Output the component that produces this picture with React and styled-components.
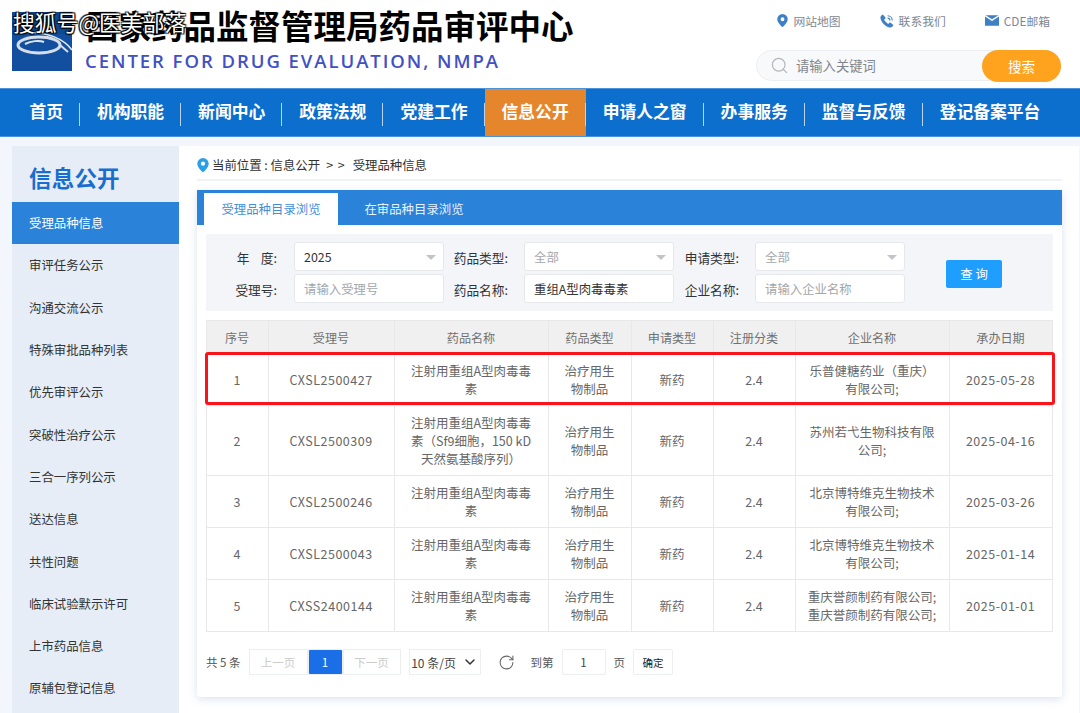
import React from "react";
import styled, { createGlobalStyle } from "styled-components";
import { RotateCw, ChevronDown, Search } from "lucide-react";

const cjk = `"Noto Sans CJK SC", "Noto Sans", sans-serif`;

const GlobalStyle = createGlobalStyle`
  html, body {
    margin: 0;
    padding: 0;
    height: 713px;
    overflow: hidden;
    background: #f3f7fd;
    font-family: ${cjk};
  }
  * { box-sizing: border-box; }
`;

const Page = styled.div`
  position: relative;
  width: 1080px;
  height: 713px;
  overflow: hidden;
`;

const Watermark = styled.div`
  position: absolute;
  left: 13px;
  top: 8px;
  font-size: 21.8px;
  line-height: 28px;
  color: #fff;
  text-shadow: 1px 1px 1px #000, -1px -1px 1px #000, 1px -1px 1px #000, -1px 1px 1px #000;
  white-space: nowrap;
`;

const Header = styled.header`
  height: 88px;
  background: #fff;
  display: flex;
  justify-content: space-between;
  padding: 0 19px 0 12px;
`;

const Brand = styled.div`
  display: flex;
  gap: 14px;
  padding-top: 6px;
`;

const BrandText = styled.div`
  display: flex;
  flex-direction: column;
`;

const BrandTitle = styled.div`
  font-size: 32.5px;
  line-height: 38px;
  font-weight: 700;
  color: #000;
  white-space: nowrap;
`;

const BrandSub = styled.div`
  margin: 5px 0 0 -1px;
  font-family: "Open Sans", sans-serif;
  font-size: 18.5px;
  line-height: 24px;
  font-weight: 600;
  letter-spacing: 1.95px;
  color: #3f51c4;
  white-space: nowrap;
`;

const LogoSvg = styled.svg`
  display: block;
  margin-top: 6px;
`;

const Tools = styled.div`
  width: 305px;
  display: flex;
  flex-direction: column;
  align-items: flex-end;
`;

const TopLinks = styled.div`
  display: flex;
  height: 50px;
  align-items: flex-start;
  padding-top: 12px;
  gap: 39px;
  padding-right: 11px;
`;

const TopLink = styled.a`
  display: flex;
  align-items: center;
  gap: 5px;
  height: 17px;
  font-size: 11.8px;
  color: #7d8794;
  white-space: nowrap;
`;

const SearchBox = styled.div`
  width: 305px;
  height: 31px;
  border: 1px solid #eceef1;
  border-radius: 16px;
  background: #f8f9fb;
  display: flex;
  align-items: center;
  padding-left: 13px;
  position: relative;
`;

const SearchHint = styled.span`
  margin-left: 7px;
  font-size: 13.3px;
  color: #80858c;
  flex: 1;
`;

const SearchButton = styled.button`
  width: 79px;
  height: 32px;
  margin: -1px -1px -1px 0;
  border: 0;
  border-radius: 16px;
  background: #ffa31f;
  color: #fff;
  font-family: inherit;
  font-size: 13.5px;
`;

const Nav = styled.nav`
  height: 49px;
  background: #0d6fcd;
  border-top: 1px solid #4b93dc;
  border-bottom: 1px solid #4b93dc;
  display: flex;
  padding-left: 12.4px;
`;

const NavItem = styled.a`
  position: relative;
  height: 47px;
  padding: 0 17px 3px;
  display: flex;
  align-items: center;
  font-size: 16.8px;
  font-weight: 700;
  color: #fff;
  white-space: nowrap;
  background: ${(p) => (p.$active ? "#e5862c" : "transparent")};

  &:not(:last-child)::after {
    content: "";
    position: absolute;
    right: 0;
    top: 14px;
    height: 23px;
    width: 1px;
    background: #b9d5f0;
  }
`;

const Body = styled.div`
  display: flex;
  padding: 9px 1px 0 12px;
  height: 576px;
`;

const Sidebar = styled.aside`
  width: 167px;
  background: #e6edf6;
  flex-shrink: 0;
`;

const SideTitle = styled.div`
  height: 56px;
  padding: 15px 0 0 17px;
  font-size: 22.5px;
  line-height: 32px;
  font-weight: 700;
  letter-spacing: 0.2px;
  color: #1a6dd0;
`;

const SideItem = styled.a`
  display: flex;
  align-items: center;
  height: 42.3px;
  padding-left: 17px;
  font-size: 12.4px;
  color: ${(p) => (p.$active ? "#fff" : "#333")};
  background: ${(p) => (p.$active ? "#2b82d9" : "transparent")};
`;

const Main = styled.main`
  flex: 1;
  background: #fff;
  padding: 0 17px 0 18px;
`;

const Crumbs = styled.div`
  height: 35px;
  border-bottom: 2px solid #f1f2f4;
  display: flex;
  align-items: center;
  font-size: 12.4px;
  color: #333;
  padding-top: 5px;
  white-space: pre;
`;

const CrumbPin = styled.span`
  display: flex;
  margin-right: 3px;
`;

const CrumbArrows = styled.span`
  margin: 0 8px 0 6px;
  word-spacing: 2px;
`;

const Card = styled.section`
  margin-top: 9px;
  height: 507px;
  background: #fff;
  border-radius: 0 0 3px 3px;
  box-shadow: 0 2px 8px rgba(120, 150, 190, 0.28);
`;

const TabBar = styled.div`
  height: 35px;
  background: #2b82d9;
  display: flex;
  align-items: flex-end;
  padding-left: 7px;
`;

const Tab = styled.a`
  width: 134px;
  height: 32px;
  display: flex;
  align-items: center;
  justify-content: center;
  font-size: 12.4px;
  color: ${(p) => (p.$active ? "#3f8fdc" : "#e6f1fb")};
  background: ${(p) => (p.$active ? "#fff" : "transparent")};
  margin-right: ${(p) => (p.$active ? "9px" : "0")};
`;

const Inner = styled.div`
  padding: 9px 9px 0;
`;

const Filter = styled.div`
  height: 77px;
  background: #f3f5f9;
  display: grid;
  grid-template-columns: 88px 150px 80px 150px 81px 150px auto;
  grid-template-rows: 29px 29px;
  row-gap: 3px;
  align-content: center;
`;

const FieldLabel = styled.label`
  display: flex;
  align-items: center;
  justify-content: flex-end;
  padding-right: ${(p) => p.$pad || "17px"};
  padding-top: 1px;
  font-size: 12.7px;
  color: #333;
  white-space: pre;
`;

const Field = styled.div`
  background: #fff;
  border: 1px solid #e6e8ec;
  border-radius: 3px;
  display: flex;
  align-items: center;
  justify-content: space-between;
  padding: 1px 7px 0 9px;
  font-size: 12.4px;
  color: ${(p) => (p.$muted ? "#a3a7ad" : "#333")};
`;

const Caret = styled.span`
  width: 0;
  height: 0;
  border-left: 5.5px solid transparent;
  border-right: 5.5px solid transparent;
  border-top: 5.5px solid #c2c4c8;
`;

const QueryCell = styled.div`
  grid-column: 7;
  grid-row: 1 / span 2;
  display: flex;
  align-items: center;
  padding: 2px 0 0 41px;
`;

const QueryButton = styled.button`
  width: 56px;
  height: 28px;
  border: 0;
  border-radius: 2px;
  background: #1e9fff;
  color: #fff;
  font-family: inherit;
  font-size: 12.4px;
`;

const TableWrap = styled.div`
  position: relative;
  margin-top: 9px;
`;

const Table = styled.table`
  width: 846px;
  margin-left: -0.5px;
  table-layout: fixed;
  border-collapse: collapse;
  font-size: 12.5px;
  color: #666;
`;

const Th = styled.th`
  height: 33px;
  background: #f0f0f0;
  border: 1px solid #e8e8e8;
  font-size: 12.1px;
  font-weight: 400;
  color: #707070;
  padding: 0;
`;

const Td = styled.td`
  height: ${(p) => p.$h}px;
  border: 1px solid #e8e8e8;
  text-align: center;
  padding: 0 12px;
  line-height: 18px;
  white-space: pre-line;
`;

const CodeTd = styled(Td)`
  letter-spacing: 0.5px;
`;

const Highlight = styled.div`
  position: absolute;
  left: -1px;
  top: 32px;
  width: 850px;
  height: 53px;
  border: 3px solid #f8141a;
  border-radius: 3px;
  pointer-events: none;
`;

const Pager = styled.div`
  display: flex;
  align-items: center;
  margin-top: 17px;
  height: 26px;
  font-size: 11.5px;
  color: #555;
`;

const PageBox = styled.div`
  height: 26px;
  width: ${(p) => p.$w}px;
  margin-left: ${(p) => p.$ml || 0}px;
  margin-right: ${(p) => p.$mr || 0}px;
  display: flex;
  align-items: center;
  justify-content: center;
  gap: 6px;
  border: 1px solid #eceef0;
  font-size: ${(p) => p.$fs || "11.5px"};
  color: ${(p) => p.$color || "#444"};
  background: ${(p) => p.$bg || "#fff"};
  border-radius: ${(p) => p.$r || "0"};
`;

const PagerText = styled.span`
  margin-left: ${(p) => p.$ml || 0}px;
  white-space: nowrap;
`;

const RefreshIcon = styled(RotateCw)`
  margin-left: 17px;
  color: #666;
`;

const columns = [
  ["序号", 62], ["受理号", 126], ["药品名称", 154], ["药品类型", 83],
  ["申请类型", 82], ["注册分类", 82], ["企业名称", 154], ["承办日期", 103],
];

const rows = [
  { no: 1, id: "CXSL2500427", name: "注射用重组A型肉毒毒素", company: "乐普健糖药业（重庆）有限公司;", date: "2025-05-28", h: 52 },
  { no: 2, id: "CXSL2500309", name: "注射用重组A型肉毒毒素（Sf9细胞，150 kD天然氨基酸序列）", company: "苏州若弋生物科技有限公司;", date: "2025-04-16", h: 70 },
  { no: 3, id: "CXSL2500246", name: "注射用重组A型肉毒毒素", company: "北京博特维克生物技术有限公司;", date: "2025-03-26", h: 52 },
  { no: 4, id: "CXSL2500043", name: "注射用重组A型肉毒毒素", company: "北京博特维克生物技术有限公司;", date: "2025-01-14", h: 52 },
  { no: 5, id: "CXSS2400144", name: "注射用重组A型肉毒毒素", company: "重庆誉颜制药有限公司;\n重庆誉颜制药有限公司;", date: "2025-01-01", h: 52 },
];

const navItems = ["首页", "机构职能", "新闻中心", "政策法规", "党建工作", "信息公开", "申请人之窗", "办事服务", "监督与反馈", "登记备案平台"];

const sideItems = ["受理品种信息", "审评任务公示", "沟通交流公示", "特殊审批品种列表", "优先审评公示", "突破性治疗公示", "三合一序列公示", "送达信息", "共性问题", "临床试验默示许可", "上市药品信息", "原辅包登记信息"];

const Logo = () => (
  <LogoSvg width="60" height="59" viewBox="0 0 60 59">
    <rect width="60" height="59" fill="#134f9f" />
    <rect width="60" height="22" fill="#0e4a93" />
    <path d="M15 21 C34 19 52 27 60 38" fill="none" stroke="#e3eaf3" strokeWidth="1.6" />
    <ellipse cx="27" cy="33" rx="21" ry="8" fill="none" stroke="#d6dfe9" strokeWidth="3" />
    <path d="M13 32 C19 29 27 28 32 30" fill="none" stroke="#dfe6ee" strokeWidth="2" />
    <path d="M48 33 L56 40" fill="none" stroke="#d6dfe9" strokeWidth="2" />
  </LogoSvg>
);

const PinIcon = ({ size = 13, color = "#3f7fc4" }) => (
  <svg width={size} height={size * 1.2} viewBox="0 0 20 24">
    <path fillRule="evenodd" fill={color} d="M10 0a9.500 9.500 0 0 1 9.500 9.500C19.500 16 10 24 10 24S.5 16 .5 9.500A9.500 9.500 0 0 1 10 0Zm0 6a3.500 3.500 0 1 0 0 7 3.500 3.500 0 0 0 0-7Z" />
  </svg>
);

const PhoneIcon = () => (
  <svg width="14" height="14" viewBox="0 0 24 24">
    <path fill="#3f7fc4" d="M5 1 C2 2 0 5 1 8 C3 15 9 21 16 23 C19 24 22 22 23 19 L17 14 L14 17 C11 15 9 13 7 10 L10 7 Z" />
    <path fill="none" stroke="#3f7fc4" strokeWidth="2" d="M13 3 A8 8 0 0 1 21 11 M13 7 A4 4 0 0 1 17 11" />
  </svg>
);

const MailIcon = () => (
  <svg width="14" height="11" viewBox="0 0 24 18">
    <path fill="#3f7fc4" d="M0 2 L12 10 L24 2 V18 H0 Z M1 0 H23 L12 7 Z" />
  </svg>
);

const App = () => (
  <Page>
    <GlobalStyle />
    <Header>
      <Brand>
        <Logo />
        <BrandText>
          <BrandTitle>国家药品监督管理局药品审评中心</BrandTitle>
          <BrandSub>CENTER FOR DRUG EVALUATION, NMPA</BrandSub>
        </BrandText>
      </Brand>
      <Tools>
        <TopLinks>
          <TopLink><PinIcon size={11} />网站地图</TopLink>
          <TopLink><PhoneIcon />联系我们</TopLink>
          <TopLink><MailIcon />CDE邮箱</TopLink>
        </TopLinks>
        <SearchBox>
          <Search size={19} color="#b5b8bc" strokeWidth={1.6} />
          <SearchHint>请输入关键词</SearchHint>
          <SearchButton>搜索</SearchButton>
        </SearchBox>
      </Tools>
    </Header>

    <Nav>
      {navItems.map((item) => (
        <NavItem key={item} $active={item === "信息公开"}>{item}</NavItem>
      ))}
    </Nav>

    <Body>
      <Sidebar>
        <SideTitle>信息公开</SideTitle>
        {sideItems.map((item, i) => (
          <SideItem key={item} $active={i === 0}>{item}</SideItem>
        ))}
      </Sidebar>

      <Main>
        <Crumbs>
          <CrumbPin><PinIcon size={12} color="#2a9fe8" /></CrumbPin>
          <span>当前位置 : 信息公开</span>
          <CrumbArrows>&gt; &gt;</CrumbArrows>
          <span>受理品种信息</span>
        </Crumbs>

        <Card>
          <TabBar>
            <Tab $active>受理品种目录浏览</Tab>
            <Tab>在审品种目录浏览</Tab>
          </TabBar>
          <Inner>
            <Filter>
              <FieldLabel>{"年    度:"}</FieldLabel>
              <Field>2025<Caret /></Field>
              <FieldLabel $pad="16px">药品类型:</FieldLabel>
              <Field $muted>全部<Caret /></Field>
              <FieldLabel $pad="16px">申请类型:</FieldLabel>
              <Field $muted>全部<Caret /></Field>
              <QueryCell><QueryButton>查 询</QueryButton></QueryCell>
              <FieldLabel>受理号:</FieldLabel>
              <Field $muted>请输入受理号</Field>
              <FieldLabel $pad="16px">药品名称:</FieldLabel>
              <Field>重组A型肉毒毒素</Field>
              <FieldLabel $pad="16px">企业名称:</FieldLabel>
              <Field $muted>请输入企业名称</Field>
            </Filter>

            <TableWrap>
              <Table>
                <colgroup>
                  {columns.map(([name, w]) => <col key={name} width={w} />)}
                </colgroup>
                <thead>
                  <tr>{columns.map(([name]) => <Th key={name}>{name}</Th>)}</tr>
                </thead>
                <tbody>
                  {rows.map((r) => (
                    <tr key={r.no}>
                      <Td $h={r.h}>{r.no}</Td>
                      <CodeTd $h={r.h}>{r.id}</CodeTd>
                      <Td $h={r.h}>{r.name}</Td>
                      <Td $h={r.h}>治疗用生物制品</Td>
                      <Td $h={r.h}>新药</Td>
                      <Td $h={r.h}>2.4</Td>
                      <Td $h={r.h}>{r.company}</Td>
                      <CodeTd $h={r.h}>{r.date}</CodeTd>
                    </tr>
                  ))}
                </tbody>
              </Table>
              <Highlight />
            </TableWrap>

            <Pager>
              <PagerText>共 5 条</PagerText>
              <PageBox $w={59} $ml={8} $color="#ccc">上一页</PageBox>
              <PageBox $w={35} $bg="#1a6fe6" $color="#fff" $r="2px">1</PageBox>
              <PageBox $w={58} $color="#ccc">下一页</PageBox>
              <PageBox $w={72} $ml={8} $fs="12px">10 条/页<ChevronDown size={16} color="#333" strokeWidth={2.2} /></PageBox>
              <RefreshIcon size={17} strokeWidth={1.5} />
              <PagerText $ml={16}>到第</PagerText>
              <PageBox $w={44} $ml={8} $mr={8} $r="2px">1</PageBox>
              <PagerText>页</PagerText>
              <PageBox $w={40} $ml={8} $fs="10.5px" $r="2px" $color="#222">确定</PageBox>
            </Pager>
          </Inner>
        </Card>
      </Main>
    </Body>

    <Watermark>搜狐号@医美部落</Watermark>
  </Page>
);

export default App;
